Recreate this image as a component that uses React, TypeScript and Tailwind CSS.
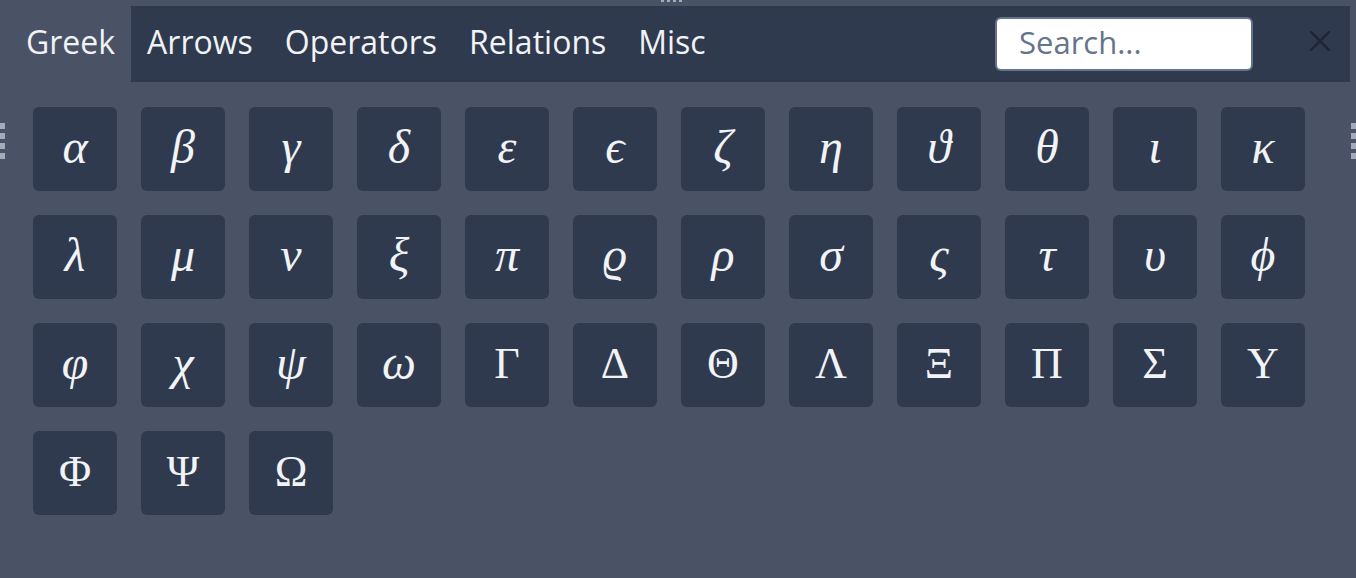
import React from "react";

const lower = ["α","β","γ","δ","ε","ϵ","ζ","η","ϑ","θ","ι","κ","λ","μ","ν","ξ","π","ϱ","ρ","σ","ς","τ","υ","ϕ","φ","χ","ψ","ω"];
const upper = ["Γ","Δ","Θ","Λ","Ξ","Π","Σ","Υ","Φ","Ψ","Ω"];

export default function App() {
  const tabs = ["Greek", "Arrows", "Operators", "Relations", "Misc"];
  return (
    <div className="relative w-[1356px] h-[578px] bg-[#4a5266] overflow-hidden" style={{ fontFamily: '"Open Sans", sans-serif' }}>
      {/* top drag handle */}
      <div className="absolute top-0 left-[661px] flex gap-[3px]">
        <div className="w-[3px] h-[2px] bg-[#a3abbb]" />
        <div className="w-[3px] h-[2px] bg-[#a3abbb]" />
        <div className="w-[3px] h-[2px] bg-[#a3abbb]" />
        <div className="w-[3px] h-[2px] bg-[#a3abbb]" />
      </div>
      {/* left handle */}
      <div className="absolute left-0 top-[123px] flex flex-col gap-[4px]">
        <div className="w-[5px] h-[6px] bg-[#a3abbb]" />
        <div className="w-[5px] h-[6px] bg-[#a3abbb]" />
        <div className="w-[5px] h-[6px] bg-[#a3abbb]" />
        <div className="w-[5px] h-[6px] bg-[#a3abbb]" />
      </div>
      {/* right handle */}
      <div className="absolute right-0 top-[123px] flex flex-col gap-[4px]">
        <div className="w-[5px] h-[6px] bg-[#a3abbb]" />
        <div className="w-[5px] h-[6px] bg-[#a3abbb]" />
        <div className="w-[5px] h-[6px] bg-[#a3abbb]" />
        <div className="w-[5px] h-[6px] bg-[#a3abbb]" />
      </div>

      <div className="pt-[6px] pl-[10px] pr-[6px]">
        <div className="flex items-center h-[76px] bg-[#2f3a4e]">
          {tabs.map((t, i) => (
            <div
              key={t}
              className={
                "h-full flex items-center px-4 pb-[4px] text-[32px] text-[#f1f3f6] " +
                (i === 0 ? "bg-[#4a5266] -ml-[10px] pl-[26px]" : "")
              }
            >
              {t}
            </div>
          ))}
          <div className="ml-auto mb-[1px] w-[258px] h-[54px] bg-white border-2 border-[#64748b] rounded-md flex items-center pl-[22px] pb-[2px] text-[31px] text-[#64748b]">
            Search...
          </div>
          <div className="ml-[57px] mr-[20px] mb-[6px] w-[20px] h-[20px]">
            <svg width="20" height="20" viewBox="0 0 20 20">
              <path d="M1 1 L19 19 M19 1 L1 19" stroke="#1f2736" strokeWidth="2.5" strokeLinecap="square" />
            </svg>
          </div>
        </div>
      </div>

      <div className="pl-[33px] pt-[25px] grid grid-cols-[repeat(12,84px)] gap-6">
        {lower.map((c) => (
          <div
            key={c}
            className="w-[84px] h-[84px] rounded-md bg-[#2f3a4e] flex items-center justify-center pb-[4px] text-[#f1f3f6] italic text-[48px]"
            style={{ fontFamily: '"Liberation Serif", serif' }}
          >
            {c}
          </div>
        ))}
        {upper.map((c) => (
          <div
            key={c}
            className="w-[84px] h-[84px] rounded-md bg-[#2f3a4e] flex items-center justify-center pb-[2px] text-[#f1f3f6] text-[44px]"
            style={{ fontFamily: '"Liberation Serif", serif' }}
          >
            {c}
          </div>
        ))}
      </div>
    </div>
  );
}
